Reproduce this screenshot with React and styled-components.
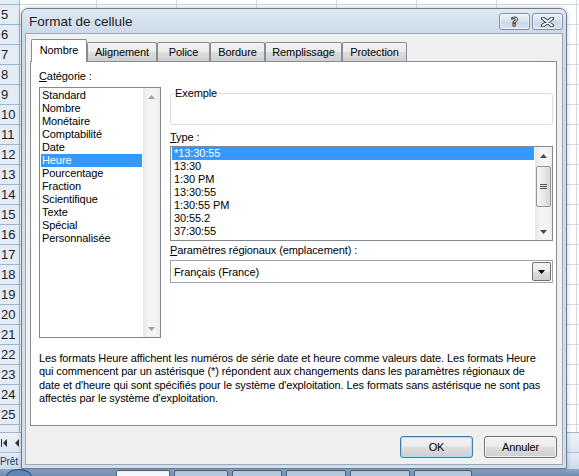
import styled, { createGlobalStyle } from "styled-components";

const GlobalStyle = createGlobalStyle`
  html, body { margin: 0; padding: 0; }
  body {
    font-family: "Liberation Sans", Arial, sans-serif;
    font-size: 11px;
    letter-spacing: -0.1px;
    color: #000;
  }
`;

const rows = Array.from({ length: 22 }, (_, i) => i + 5);

const categories = [
  "Standard", "Nombre", "Monétaire", "Comptabilité", "Date", "Heure",
  "Pourcentage", "Fraction", "Scientifique", "Texte", "Spécial", "Personnalisée",
];

const types = ["*13:30:55", "13:30", "1:30 PM", "13:30:55", "1:30:55 PM", "30:55.2", "37:30:55"];

const tabs = [
  { label: "Nombre", w: 56 },
  { label: "Alignement", w: 70 },
  { label: "Police", w: 53 },
  { label: "Bordure", w: 55 },
  { label: "Remplissage", w: 77 },
  { label: "Protection", w: 65 },
];

const description = [
  "Les formats Heure affichent les numéros de série date et heure comme valeurs date. Les formats Heure",
  "qui commencent par un astérisque (*) répondent aux changements dans les paramètres régionaux de",
  "date et d'heure qui sont spécifiés pour le système d'exploitation. Les formats sans astérisque ne sont pas",
  "affectés par le système d'exploitation.",
];

function Arrow({ down, color }) {
  return (
    <svg width="7" height="4" viewBox="0 0 7 4">
      <polygon points={down ? "0,0 7,0 3.5,4" : "0,4 7,4 3.5,0"} fill={color} />
    </svg>
  );
}

function ScrollBar({ disabled }) {
  const c = disabled ? "#a3a3a3" : "#4a4a4a";
  return (
    <Scroll>
      <ScrollBtn><Arrow color={c} /></ScrollBtn>
      <Track>
        {!disabled && (
          <Thumb>
            <svg width="7" height="6" viewBox="0 0 7 6">
              <path d="M0 0.5h7M0 2.5h7M0 4.5h7" stroke="#555" strokeWidth="1" />
            </svg>
          </Thumb>
        )}
      </Track>
      <ScrollBtn><Arrow down color={c} /></ScrollBtn>
    </Scroll>
  );
}

export default function App() {
  return (
    <Screen>
      <GlobalStyle />
      <Sheet>
        <RowHeads>
          {rows.map((r) => (
            <RowHead key={r}>{r < 26 ? r : ""}</RowHead>
          ))}
        </RowHeads>
        <Cells />
      </Sheet>
      <SheetNav>
        <NavArrow>
          <svg width="6" height="8" viewBox="0 0 6 8"><path d="M0.5 0v8" stroke="#333" /><polygon points="6,0 6,8 2,4" fill="#333" /></svg>
        </NavArrow>
        <NavArrow>
          <svg width="5" height="8" viewBox="0 0 5 8"><polygon points="5,0 5,8 1,4" fill="#333" /></svg>
        </NavArrow>
      </SheetNav>
      <StatusBar>Prêt</StatusBar>
      <Taskbar>
        <Orb />
        <TaskBtn $w={52} $light />
        <TaskBtn $w={52} />
        <TaskBtn $w={48} />
        <TaskBtn $w={58} />
        <TaskBtn $w={58} />
        <TaskBtn $w={56} />
      </Taskbar>

      <Dialog>
        <TitleBar>
          <Title>Format de cellule</Title>
          <CaptionButtons>
            <CaptionBtn><HelpGlyph>?</HelpGlyph></CaptionBtn>
            <CaptionBtn>
              <svg width="13" height="10" viewBox="0 0 13 10">
                <path d="M2 1.5L11 8.5M11 1.5L2 8.5" stroke="#3b4653" strokeWidth="4" strokeLinecap="round" />
                <path d="M2 1.5L11 8.5M11 1.5L2 8.5" stroke="#fff" strokeWidth="2" strokeLinecap="round" />
              </svg>
            </CaptionBtn>
          </CaptionButtons>
        </TitleBar>

        <Body>
          <TabStrip>
            {tabs.map((t, i) => (
              <Tab key={t.label} $w={t.w} $active={i === 0}>{t.label}</Tab>
            ))}
          </TabStrip>

          <Panel>
            <LeftCol>
              <Label><u>C</u>atégorie :</Label>
              <ListBox $h={251}>
                <Items $pad={1}>
                  {categories.map((c) => (
                    <Item key={c} $sel={c === "Heure"} $indent={1}>{c}</Item>
                  ))}
                </Items>
                <ScrollBar disabled />
              </ListBox>
            </LeftCol>

            <RightCol>
              <GroupBox>
                <Legend>Exemple</Legend>
              </GroupBox>
              <Label $mt={6}><u>T</u>ype :</Label>
              <ListBox $h={95} $mt={2}>
                <Items $pad={0}>
                  {types.map((t, i) => (
                    <Item key={i} $sel={i === 0} $indent={2}>{t}</Item>
                  ))}
                </Items>
                <ScrollBar />
              </ListBox>
              <Label $mt={3}><u>P</u>aramètres régionaux (emplacement) :</Label>
              <Combo>
                <ComboText>Français (France)</ComboText>
                <DropBtn><Arrow down color="#000" /></DropBtn>
              </Combo>
            </RightCol>

            <Description>
              {description.map((l) => (
                <Line key={l}>{l}</Line>
              ))}
            </Description>
          </Panel>

          <ButtonRow>
            <PushButton $default>OK</PushButton>
            <PushButton>Annuler</PushButton>
          </ButtonRow>
        </Body>
      </Dialog>
    </Screen>
  );
}

const Screen = styled.div`
  position: relative;
  width: 579px;
  height: 476px;
  overflow: hidden;
  display: grid;
  grid-template-rows: 432px 20px 17px 7px;
  background: #fff;
`;

const Sheet = styled.div`
  display: grid;
  grid-template-columns: 20px 1fr;
  overflow: hidden;
`;

const RowHeads = styled.div`
  display: flex;
  flex-direction: column;
  padding-top: 4px;
  background: #e4ecf7;
  border-right: 1px solid #9eb6ce;
  overflow: hidden;
`;

const RowHead = styled.div`
  flex: 0 0 20px;
  box-sizing: border-box;
  border-top: 1px solid #9eb6ce;
  padding-left: 1px;
  padding-bottom: 1px;
  display: flex;
  align-items: center;
  font-size: 13px;
  color: #222;
`;

const Cells = styled.div`
  background-color: #fff;
  background-image:
    repeating-linear-gradient(to bottom, #d0d7e5 0 1px, transparent 1px 20px),
    repeating-linear-gradient(to right, transparent 0 76px, #d0d7e5 76px 77px, transparent 77px 80px);
  background-position: 0 4px, 0 0;
`;

const SheetNav = styled.div`
  display: flex;
  align-items: center;
  gap: 7px;
  padding-left: 1px;
  background: linear-gradient(#eef3fa, #dbe5f2);
  border-top: 1px solid #9eb6ce;
`;

const NavArrow = styled.span`
  display: flex;
`;

const StatusBar = styled.div`
  display: flex;
  align-items: center;
  padding: 1px 0 0 0;
  font-size: 10px;
  color: #1e395b;
  background: linear-gradient(#e5edf7, #cbdaec);
  border-top: 1px solid #a9bfd6;
`;

const Taskbar = styled.div`
  display: flex;
  align-items: flex-start;
  gap: 4px;
  padding-left: 6px;
  background: linear-gradient(#8fa9c7, #6e8cb0);
  overflow: hidden;
`;

const Orb = styled.div`
  width: 24px;
  height: 14px;
  margin-right: 80px;
  border-radius: 50%;
  border: 1px solid #2e4b73;
  background: #5f86b7;
`;

const TaskBtn = styled.div`
  width: ${(p) => p.$w}px;
  height: 10px;
  margin-top: 1px;
  border: 1px solid #4a6384;
  border-radius: 2px;
  background: ${(p) => (p.$light ? "#f4f7fb" : "#b7c9de")};
`;

const Dialog = styled.div`
  position: absolute;
  left: 21px;
  top: 8px;
  width: 546px;
  height: 461px;
  box-sizing: border-box;
  display: flex;
  flex-direction: column;
  padding: 0 3px 3px;
  border: 1px solid #6f7c8c;
  border-radius: 7px 7px 0 0;
  background: linear-gradient(#e0e9f5, #ccdaea 24px, #d2deec);
  box-shadow: 0 0 4px rgba(0, 0, 0, 0.25);
`;

const TitleBar = styled.div`
  height: 24px;
  flex: 0 0 24px;
  display: flex;
  align-items: center;
  justify-content: space-between;
  padding-left: 4px;
`;

const Title = styled.span`
  font-size: 13.5px;
  letter-spacing: 0;
  color: #1e1e1e;
  margin-top: 1px;
`;

const CaptionButtons = styled.div`
  display: flex;
  gap: 2px;
  margin-top: 1px;
`;

const CaptionBtn = styled.div`
  width: 31px;
  height: 17px;
  box-sizing: border-box;
  display: flex;
  align-items: center;
  justify-content: center;
  border: 1px solid #7e8fa5;
  border-radius: 3px;
  background: linear-gradient(#edf2f8, #d5e0ed 50%, #c8d6e7 51%, #d8e3f0);
  box-shadow: inset 0 0 0 1px rgba(255, 255, 255, 0.6);
`;

const HelpGlyph = styled.span`
  font-family: "DejaVu Sans", sans-serif;
  font-size: 13px;
  font-weight: bold;
  line-height: 1;
  color: #fff;
  -webkit-text-stroke: 1px #3b4653;
`;

const Body = styled.div`
  flex: 1;
  display: flex;
  flex-direction: column;
  padding: 5px 5px 0 4px;
  background: #f0f0f0;
  border: 1px solid #9aa8b8;
`;

const TabStrip = styled.div`
  display: flex;
  align-items: flex-end;
  height: 22px;
  padding-left: 1px;
`;

const Tab = styled.div`
  position: relative;
  z-index: ${(p) => (p.$active ? 1 : 0)};
  width: ${(p) => p.$w}px;
  height: ${(p) => (p.$active ? 23 : 19)}px;
  margin-bottom: ${(p) => (p.$active ? -1 : 0)}px;
  box-sizing: border-box;
  display: flex;
  align-items: center;
  justify-content: center;
  padding-bottom: ${(p) => (p.$active ? 2 : 0)}px;
  border: 1px solid #898c95;
  border-bottom: none;
  border-radius: 2px 2px 0 0;
  background: ${(p) => (p.$active ? "#fff" : "linear-gradient(#f2f2f2, #ebebeb 50%, #dddddd 51%, #cfcfcf)")};
`;

const Panel = styled.div`
  height: 365px;
  box-sizing: border-box;
  display: grid;
  grid-template-columns: 122px 383px;
  grid-template-rows: 268px auto;
  column-gap: 9px;
  align-content: start;
  padding: 8px 3px 0 8px;
  border: 1px solid #898c95;
  background: #fff;
`;

const LeftCol = styled.div`
  display: flex;
  flex-direction: column;
`;

const RightCol = styled.div`
  display: flex;
  flex-direction: column;
`;

const Label = styled.div`
  height: 13px;
  line-height: 13px;
  margin-top: ${(p) => p.$mt || 0}px;
  white-space: nowrap;
`;

const ListBox = styled.div`
  height: ${(p) => p.$h}px;
  margin-top: ${(p) => (p.$mt === undefined ? 4 : p.$mt)}px;
  box-sizing: border-box;
  display: flex;
  border: 1px solid #828790;
  background: #fff;
`;

const Items = styled.div`
  flex: 1;
  padding-top: ${(p) => p.$pad}px;
  overflow: hidden;
`;

const Item = styled.div`
  height: 13px;
  line-height: 13px;
  margin: 0 1px;
  padding-left: ${(p) => p.$indent}px;
  white-space: nowrap;
  background: ${(p) => (p.$sel ? "#3399ff" : "transparent")};
  color: ${(p) => (p.$sel ? "#fff" : "#000")};
`;

const Scroll = styled.div`
  width: 17px;
  flex: 0 0 17px;
  display: flex;
  flex-direction: column;
  background: linear-gradient(90deg, #e6e6e6, #f4f4f4 30%, #f4f4f4 70%, #ececec);
`;

const ScrollBtn = styled.div`
  height: 17px;
  flex: 0 0 17px;
  display: flex;
  align-items: center;
  justify-content: center;
`;

const Track = styled.div`
  flex: 1;
  padding: 2px 0 0 1px;
`;

const Thumb = styled.div`
  width: 15px;
  height: 41px;
  box-sizing: border-box;
  display: flex;
  align-items: center;
  justify-content: center;
  border: 1px solid #979797;
  border-radius: 2px;
  background: linear-gradient(90deg, #f5f5f5, #e8e8e8 50%, #d6d6d6);
`;

const GroupBox = styled.div`
  height: 32px;
  margin-top: 23px;
  box-sizing: border-box;
  border: 1px solid #d5dfe5;
  border-radius: 3px;
`;

const Legend = styled.div`
  width: fit-content;
  margin: -7px 0 0 3px;
  padding: 0 1px;
  line-height: 13px;
  background: #fff;
`;

const Combo = styled.div`
  height: 23px;
  margin-top: 3px;
  box-sizing: border-box;
  display: flex;
  align-items: center;
  justify-content: space-between;
  padding: 0 1px 0 3px;
  border: 1px solid #a4a4a4;
  background: #fff;
`;

const ComboText = styled.span`
  white-space: nowrap;
`;

const DropBtn = styled.div`
  width: 19px;
  height: 19px;
  box-sizing: border-box;
  display: flex;
  align-items: center;
  justify-content: center;
  border: 1px solid #707070;
  border-radius: 2px;
  background: linear-gradient(#f2f2f2, #ebebeb 50%, #dddddd 51%, #cfcfcf);
`;

const Description = styled.div`
  grid-column: 1 / -1;
  margin-top: 14px;
`;

const Line = styled.div`
  line-height: 13.4px;
  white-space: nowrap;
`;

const ButtonRow = styled.div`
  display: flex;
  justify-content: flex-end;
  gap: 11px;
  margin-top: 10px;
`;

const PushButton = styled.div`
  width: 73px;
  height: 22px;
  box-sizing: border-box;
  display: flex;
  align-items: center;
  justify-content: center;
  border: 1px solid ${(p) => (p.$default ? "#3c7fb1" : "#707070")};
  border-radius: 3px;
  background: linear-gradient(#f2f2f2, #ebebeb 50%, #dddddd 51%, #cfcfcf);
  box-shadow: inset 0 0 0 1px ${(p) => (p.$default ? "#9fe0f9" : "rgba(255,255,255,0.7)")};
`;
